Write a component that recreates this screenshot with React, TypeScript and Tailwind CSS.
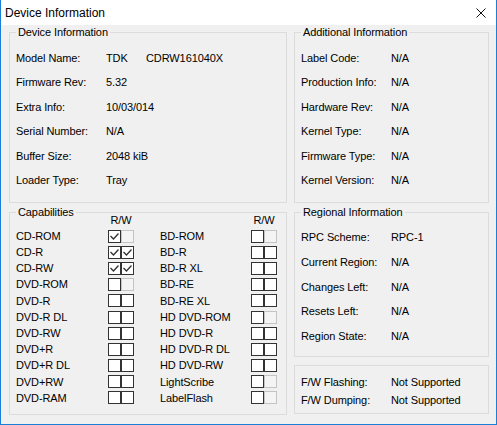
import React from "react";

const FONT = "font-[family-name:'Liberation_Sans',Arial,sans-serif]";

function Group({
  title,
  className,
  children,
}: {
  title?: string;
  className: string;
  children: React.ReactNode;
}) {
  return (
    <div className={`relative border border-[#dcdcdc] ${className}`}>
      {title && (
        <span className="absolute -top-[7px] left-[6px] px-[2px] bg-[#f0f0f0] leading-[13px] whitespace-nowrap">
          {title}
        </span>
      )}
      {children}
    </div>
  );
}

function Row({
  label,
  value,
  h,
}: {
  label: string;
  value: React.ReactNode;
  h: string;
}) {
  return (
    <div className={`flex items-center ${h}`}>
      <span className="w-[90px] shrink-0 whitespace-nowrap">{label}</span>
      <span className="whitespace-nowrap">{value}</span>
    </div>
  );
}

type BoxState = "on" | "off" | "dis";

function Box({ s }: { s: BoxState }) {
  if (s === "dis") {
    return <div className="w-[13px] h-[13px] border border-[#c4c4c4] bg-[#f4f4f4]" />;
  }
  return (
    <div className="w-[13px] h-[13px] border border-[#333333] bg-white flex items-center justify-center">
      {s === "on" && (
        <svg width="11" height="11" viewBox="0 0 11 11">
          <polyline
            points="1.5,5 4.5,8 9.5,2.5"
            fill="none"
            stroke="#333333"
            strokeWidth="1.3"
          />
        </svg>
      )}
    </div>
  );
}

const leftCaps: [string, BoxState, BoxState][] = [
  ["CD-ROM", "on", "dis"],
  ["CD-R", "on", "on"],
  ["CD-RW", "on", "on"],
  ["DVD-ROM", "off", "dis"],
  ["DVD-R", "off", "off"],
  ["DVD-R DL", "off", "off"],
  ["DVD-RW", "off", "off"],
  ["DVD+R", "off", "off"],
  ["DVD+R DL", "off", "off"],
  ["DVD+RW", "off", "off"],
  ["DVD-RAM", "off", "off"],
];

const rightCaps: [string, BoxState, BoxState][] = [
  ["BD-ROM", "off", "dis"],
  ["BD-R", "off", "off"],
  ["BD-R XL", "off", "off"],
  ["BD-RE", "off", "off"],
  ["BD-RE XL", "off", "off"],
  ["HD DVD-ROM", "off", "dis"],
  ["HD DVD-R", "off", "off"],
  ["HD DVD-R DL", "off", "off"],
  ["HD DVD-RW", "off", "off"],
  ["LightScribe", "off", "dis"],
  ["LabelFlash", "off", "dis"],
];

function CapColumn({
  items,
  labelW,
}: {
  items: [string, BoxState, BoxState][];
  labelW: string;
}) {
  return (
    <div className="flex flex-col">
      <div className="flex items-center h-[15px]">
        <span className={`${labelW} shrink-0`} />
        <span className="w-[26px] text-center leading-[13px]">R/W</span>
      </div>
      {items.map(([name, r, w]) => (
        <div key={name} className="flex items-center h-[16.2px]">
          <span className={`${labelW} shrink-0 whitespace-nowrap`}>{name}</span>
          <div className="flex">
            <Box s={r} />
            <Box s={w} />
          </div>
        </div>
      ))}
    </div>
  );
}

export default function App() {
  const rowH = "h-[24.4px]";
  return (
    <div
      className={`w-[497px] h-[425px] bg-[#f0f0f0] border-l border-r border-b border-[#1a7fd6] text-black text-[11px] tracking-[-0.1px] ${FONT} flex flex-col`}
    >
      <div className="h-[25px] bg-white flex items-center justify-between pl-[4px] pr-[10px] shrink-0">
        <span className="text-[12px] tracking-normal leading-[16px]">Device Information</span>
        <svg width="10" height="10" viewBox="0 0 10 10">
          <line x1="0.5" y1="0.5" x2="9.5" y2="9.5" stroke="#111" strokeWidth="1" />
          <line x1="9.5" y1="0.5" x2="0.5" y2="9.5" stroke="#111" strokeWidth="1" />
        </svg>
      </div>

      <div className="flex gap-[7px] pl-[8px] pt-[7px]">
        <div className="flex flex-col gap-[9px] w-[278px] shrink-0">
          <Group title="Device Information" className="h-[171px] pt-[13px] pl-[6px]">
            <Row
              h={rowH}
              label="Model Name:"
              value={
                <span className="flex">
                  <span className="w-[40px]">TDK</span>
                  <span>CDRW161040X</span>
                </span>
              }
            />
            <Row h={rowH} label="Firmware Rev:" value="5.32" />
            <Row h={rowH} label="Extra Info:" value="10/03/014" />
            <Row h={rowH} label="Serial Number:" value="N/A" />
            <Row h={rowH} label="Buffer Size:" value="2048 kiB" />
            <Row h={rowH} label="Loader Type:" value="Tray" />
          </Group>

          <Group title="Capabilities" className="h-[203px] pl-[6px]">
            <div className="flex gap-[26px]">
              <CapColumn items={leftCaps} labelW="w-[92px]" />
              <CapColumn items={rightCaps} labelW="w-[91px]" />
            </div>
          </Group>
        </div>

        <div className="flex flex-col w-[195px] shrink-0">
          <Group title="Additional Information" className="h-[171px] pt-[13px] pl-[6px]">
            <Row h={rowH} label="Label Code:" value="N/A" />
            <Row h={rowH} label="Production Info:" value="N/A" />
            <Row h={rowH} label="Hardware Rev:" value="N/A" />
            <Row h={rowH} label="Kernel Type:" value="N/A" />
            <Row h={rowH} label="Firmware Type:" value="N/A" />
            <Row h={rowH} label="Kernel Version:" value="N/A" />
          </Group>

          <Group title="Regional Information" className="mt-[9px] h-[145px] pt-[12px] pl-[6px]">
            <Row h="h-[24.75px]" label="RPC Scheme:" value="RPC-1" />
            <Row h="h-[24.75px]" label="Current Region:" value="N/A" />
            <Row h="h-[24.75px]" label="Changes Left:" value="N/A" />
            <Row h="h-[24.75px]" label="Resets Left:" value="N/A" />
            <Row h="h-[24.75px]" label="Region State:" value="N/A" />
          </Group>

          <Group className="mt-[8px] h-[49px] pt-[7px] pl-[6px]">
            <Row h="h-[18px]" label="F/W Flashing:" value="Not Supported" />
            <Row h="h-[18px]" label="F/W Dumping:" value="Not Supported" />
          </Group>
        </div>
      </div>
    </div>
  );
}
